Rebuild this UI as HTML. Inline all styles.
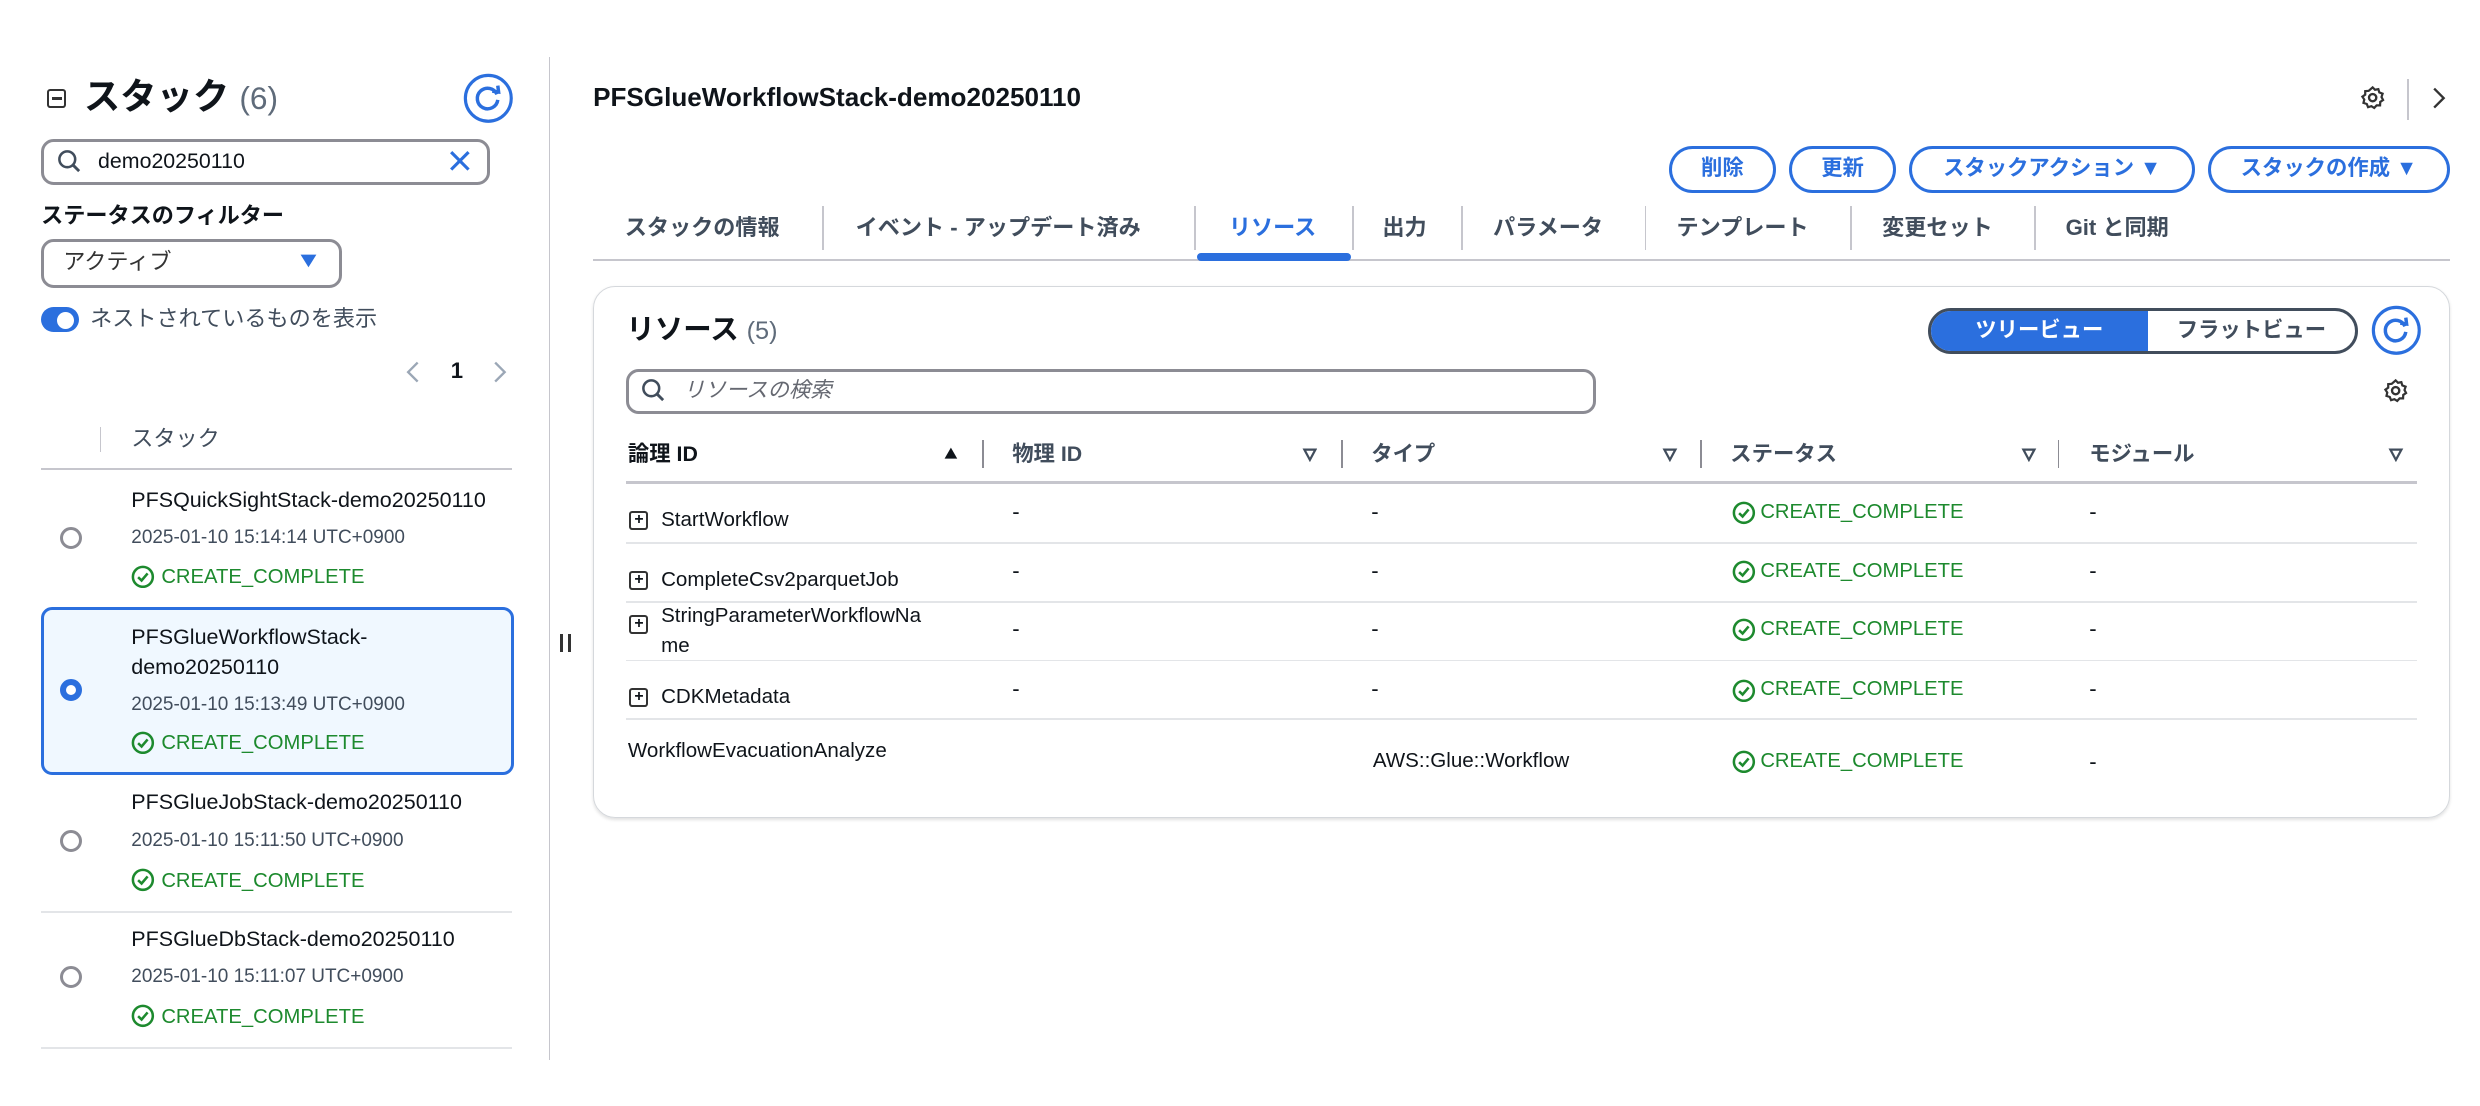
<!DOCTYPE html>
<html><head><meta charset="utf-8">
<style>
html,body{margin:0;padding:0;background:#fff;}
body{width:2480px;height:1106px;overflow:hidden;}
#w{position:relative;width:1568px;height:699px;zoom:1.5816;font-family:"Liberation Sans","Noto Sans CJK JP",sans-serif;color:#0f141a;font-size:14px;}
.t{position:absolute;white-space:nowrap;line-height:18px;}
.b{font-weight:bold;}
.s{font-size:12px;color:#414d5c;}
.ok{color:#1d8a2e;font-size:12.8px;}
.blue{color:#2b6fde;}
.ln{position:absolute;background:#d5dbdb;}
.box{position:absolute;box-sizing:border-box;}
.btn{position:absolute;box-sizing:border-box;border:2px solid #2b6fde;border-radius:16px;color:#2b6fde;font-weight:bold;font-size:13.5px;text-align:center;line-height:25px;height:30px;top:92px;}
.radio{position:absolute;width:14px;height:14px;border:2px solid #8c8c94;border-radius:50%;box-sizing:border-box;}
svg{position:absolute;}
.vd{position:absolute;width:1px;background:#c6c6cd;}
.nm{font-size:13.6px;}
</style></head><body><div id="w">

<div class="box" style="left:30px;top:56px;width:12px;height:12px;border:1.6px solid #333;border-radius:2px;"></div>
<div class="ln" style="left:33px;top:61.5px;width:6px;height:1.5px;background:#333"></div>
<div class="t b" style="left:53px;top:46px;font-size:23px;line-height:30px;">スタック <span style="font-weight:normal;color:#5f6b7a;font-size:20px">(6)</span></div>
<svg style="left:293px;top:46px" width="32" height="32" viewBox="0 0 32 32"><circle cx="16" cy="16" r="14.5" fill="none" stroke="#2b6fde" stroke-width="2"/><path d="M21.5 13.5 A6.5 6.5 0 1 0 22 17" fill="none" stroke="#2b6fde" stroke-width="2.2"/><path d="M18.5 11.5 L22.5 12 L22 8" fill="none" stroke="#2b6fde" stroke-width="2.2"/></svg>

<div class="box" style="left:26px;top:88px;width:284px;height:29px;border:2px solid #8c8c94;border-radius:8px;"></div>
<svg style="left:36px;top:94px" width="16" height="16" viewBox="0 0 16 16"><circle cx="6.5" cy="6.5" r="5" fill="none" stroke="#414d5c" stroke-width="1.6"/><path d="M10 10 L14 14" stroke="#414d5c" stroke-width="1.8"/></svg>
<div class="t" style="left:62px;top:93px;font-size:13.5px;">demo20250110</div>
<svg style="left:283px;top:94px" width="15" height="15" viewBox="0 0 15 15"><path d="M2 2 L13 13 M13 2 L2 13" stroke="#2b6fde" stroke-width="2"/></svg>

<div class="t b" style="left:26px;top:128px;font-size:14px;">ステータスのフィルター</div>
<div class="box" style="left:26px;top:151px;width:190px;height:31px;border:2px solid #8c8c94;border-radius:8px;"></div>
<div class="t" style="left:40px;top:157px;color:#333;">アクティブ</div>
<svg style="left:189px;top:160px" width="12" height="10" viewBox="0 0 12 10"><path d="M1 1 L11 1 L6 9 Z" fill="#2b6fde"/></svg>

<div class="box" style="left:26px;top:194px;width:24px;height:16px;background:#2b6fde;border-radius:8px;"></div>
<div class="box" style="left:36px;top:197px;width:11px;height:11px;background:#fff;border-radius:50%;"></div>
<div class="t" style="left:57px;top:193px;color:#414d5c;">ネストされているものを表示</div>

<svg style="left:256px;top:228px" width="10" height="14" viewBox="0 0 10 14"><path d="M8 1 L2 7 L8 13" fill="none" stroke="#9ba7b6" stroke-width="1.5"/></svg>
<div class="t b" style="left:285px;top:226px;">1</div>
<svg style="left:311px;top:228px" width="10" height="14" viewBox="0 0 10 14"><path d="M2 1 L8 7 L2 13" fill="none" stroke="#9ba7b6" stroke-width="1.5"/></svg>

<div class="vd" style="left:63px;top:270px;height:16px;"></div>
<div class="t" style="left:83px;top:269px;color:#414d5c;">スタック</div>
<div class="ln" style="left:26px;top:296px;width:298px;height:1px;background:#c6c6cd"></div>

<div class="t nm" style="left:83px;top:307px;">PFSQuickSightStack-demo20250110</div>
<div class="t s" style="left:83px;top:331px;">2025-01-10 15:14:14 UTC+0900</div>
<div class="t ok" style="left:102px;top:356px;">CREATE_COMPLETE</div>
<div class="radio" style="left:38px;top:333px;"></div>
<div class="box" style="left:26px;top:384px;width:299px;height:106px;background:#f0f8ff;border:2px solid #2b6fde;border-radius:7px;"></div>
<div class="t nm" style="left:83px;top:393px;line-height:19.5px;">PFSGlueWorkflowStack-<br>demo20250110</div>
<div class="t s" style="left:83px;top:437px;">2025-01-10 15:13:49 UTC+0900</div>
<div class="t ok" style="left:102px;top:461px;">CREATE_COMPLETE</div>
<div class="box" style="left:38px;top:429px;width:14px;height:14px;border:4px solid #2b6fde;border-radius:50%;background:#fff;"></div>
<div class="t nm" style="left:83px;top:498px;">PFSGlueJobStack-demo20250110</div>
<div class="t s" style="left:83px;top:523px;">2025-01-10 15:11:50 UTC+0900</div>
<div class="t ok" style="left:102px;top:548px;">CREATE_COMPLETE</div>
<div class="radio" style="left:38px;top:525px;"></div>
<div class="ln" style="left:26px;top:576px;width:298px;height:1px;background:#e3e5e8"></div>
<div class="t nm" style="left:83px;top:585px;">PFSGlueDbStack-demo20250110</div>
<div class="t s" style="left:83px;top:609px;">2025-01-10 15:11:07 UTC+0900</div>
<div class="t ok" style="left:102px;top:634px;">CREATE_COMPLETE</div>
<div class="radio" style="left:38px;top:611px;"></div>
<div class="ln" style="left:26px;top:662px;width:298px;height:1px;background:#e3e5e8"></div>

<svg style="left:83px;top:357px" width="15" height="15" viewBox="0 0 15 15"><circle cx="7.5" cy="7.5" r="6.3" fill="none" stroke="#1d8a2e" stroke-width="1.6"/><path d="M4.5 7.7 L6.7 9.8 L10.5 5.3" fill="none" stroke="#1d8a2e" stroke-width="1.6"/></svg>
<svg style="left:83px;top:462px" width="15" height="15" viewBox="0 0 15 15"><circle cx="7.5" cy="7.5" r="6.3" fill="none" stroke="#1d8a2e" stroke-width="1.6"/><path d="M4.5 7.7 L6.7 9.8 L10.5 5.3" fill="none" stroke="#1d8a2e" stroke-width="1.6"/></svg>
<svg style="left:83px;top:549px" width="15" height="15" viewBox="0 0 15 15"><circle cx="7.5" cy="7.5" r="6.3" fill="none" stroke="#1d8a2e" stroke-width="1.6"/><path d="M4.5 7.7 L6.7 9.8 L10.5 5.3" fill="none" stroke="#1d8a2e" stroke-width="1.6"/></svg>
<svg style="left:83px;top:635px" width="15" height="15" viewBox="0 0 15 15"><circle cx="7.5" cy="7.5" r="6.3" fill="none" stroke="#1d8a2e" stroke-width="1.6"/><path d="M4.5 7.7 L6.7 9.8 L10.5 5.3" fill="none" stroke="#1d8a2e" stroke-width="1.6"/></svg>

<div class="vd" style="left:347px;top:36px;height:634px;background:#c6c6cd"></div>
<div class="box" style="left:354px;top:401px;width:2px;height:11px;background:#333"></div>
<div class="box" style="left:359px;top:401px;width:2px;height:11px;background:#333"></div>

<div class="t b" style="left:375px;top:52px;font-size:16.5px;line-height:20px;">PFSGlueWorkflowStack-demo20250110</div>
<svg style="left:1492px;top:54px" width="16" height="16" viewBox="0 0 16 16"><circle cx="8" cy="8" r="2.3" fill="none" stroke="#333" stroke-width="1.5"/><path d="M8 1.5 L9.5 3 L11.6 2.6 L12.2 4.7 L14.3 5.5 L13.6 7.6 L14.6 9.5 L12.8 10.7 L12.7 12.9 L10.5 12.9 L9 14.5 L7.2 13.4 L5.1 14 L4.3 12 L2.2 11.3 L2.7 9.2 L1.5 7.4 L3.3 6.1 L3.3 3.9 L5.5 3.7 Z" fill="none" stroke="#333" stroke-width="1.4"/></svg>
<div class="vd" style="left:1522px;top:50px;height:26px;"></div>
<svg style="left:1537px;top:55px" width="10" height="14" viewBox="0 0 10 14"><path d="M2 1 L8 7 L2 13" fill="none" stroke="#333" stroke-width="1.5"/></svg>

<div class="btn" style="left:1055px;width:68px;">削除</div>
<div class="btn" style="left:1131px;width:68px;">更新</div>
<div class="btn" style="left:1207px;width:181px;">スタックアクション ▼</div>
<div class="btn" style="left:1396px;width:153px;">スタックの作成 ▼</div>

<div class="t b" style="left:395px;top:135px;color:#414d5c;">スタックの情報</div>
<div class="vd" style="left:520px;top:130px;height:28px;"></div>
<div class="t b" style="left:541px;top:135px;color:#414d5c;">イベント - アップデート済み</div>
<div class="vd" style="left:755px;top:130px;height:28px;"></div>
<div class="t b blue" style="left:777px;top:135px;">リソース</div>
<div class="vd" style="left:855px;top:130px;height:28px;"></div>
<div class="t b" style="left:874px;top:135px;color:#414d5c;">出力</div>
<div class="vd" style="left:924px;top:130px;height:28px;"></div>
<div class="t b" style="left:944px;top:135px;color:#414d5c;">パラメータ</div>
<div class="vd" style="left:1040px;top:130px;height:28px;"></div>
<div class="t b" style="left:1060px;top:135px;color:#414d5c;">テンプレート</div>
<div class="vd" style="left:1170px;top:130px;height:28px;"></div>
<div class="t b" style="left:1190px;top:135px;color:#414d5c;">変更セット</div>
<div class="vd" style="left:1286px;top:130px;height:28px;"></div>
<div class="t b" style="left:1306px;top:135px;color:#414d5c;">Git と同期</div>
<div class="ln" style="left:375px;top:164px;width:1174px;height:1px;background:#c6c6cd"></div>
<div class="box" style="left:757px;top:160px;width:97px;height:5px;background:#2b6fde;border-radius:3px;"></div>

<div class="box" style="left:375px;top:181px;width:1174px;height:336px;border:1px solid #d5d8dc;border-radius:14px;box-shadow:0 1px 2px rgba(0,0,0,0.12);"></div>
<div class="t b" style="left:396px;top:197px;font-size:18px;line-height:24px;">リソース <span style="font-weight:normal;color:#5f6b7a;font-size:16px">(5)</span></div>
<div class="box" style="left:1219px;top:195px;width:272px;height:29px;border:2px solid #414d5c;border-radius:15px;overflow:hidden;">
  <div style="position:absolute;left:0;top:0;width:137px;height:100%;background:#2b6fde;color:#fff;font-weight:bold;font-size:13.5px;text-align:center;line-height:25px;">ツリービュー</div>
  <div style="position:absolute;left:137px;top:0;right:0;height:100%;color:#414d5c;font-weight:bold;font-size:13.5px;text-align:center;line-height:25px;">フラットビュー</div>
</div>
<svg style="left:1499px;top:193px" width="32" height="32" viewBox="0 0 32 32"><circle cx="16" cy="16" r="14.5" fill="none" stroke="#2b6fde" stroke-width="2"/><path d="M21.5 13.5 A6.5 6.5 0 1 0 22 17" fill="none" stroke="#2b6fde" stroke-width="2.2"/><path d="M18.5 11.5 L22.5 12 L22 8" fill="none" stroke="#2b6fde" stroke-width="2.2"/></svg>

<div class="box" style="left:396px;top:233px;width:613px;height:29px;border:2px solid #8c8c94;border-radius:8px;"></div>
<svg style="left:405px;top:239px" width="16" height="16" viewBox="0 0 16 16"><circle cx="6.5" cy="6.5" r="5" fill="none" stroke="#414d5c" stroke-width="1.6"/><path d="M10 10 L14 14" stroke="#414d5c" stroke-width="1.8"/></svg>
<div class="t" style="left:432px;top:238px;font-style:italic;color:#656871;font-size:13.5px;">リソースの検索</div>
<svg style="left:1507px;top:239px" width="16" height="16" viewBox="0 0 16 16"><circle cx="8" cy="8" r="2.3" fill="none" stroke="#333" stroke-width="1.5"/><path d="M8 1.5 L9.5 3 L11.6 2.6 L12.2 4.7 L14.3 5.5 L13.6 7.6 L14.6 9.5 L12.8 10.7 L12.7 12.9 L10.5 12.9 L9 14.5 L7.2 13.4 L5.1 14 L4.3 12 L2.2 11.3 L2.7 9.2 L1.5 7.4 L3.3 6.1 L3.3 3.9 L5.5 3.7 Z" fill="none" stroke="#333" stroke-width="1.4"/></svg>

<div class="t b" style="left:397px;top:278px;font-size:13.5px;">論理 ID</div>
<svg style="left:596px;top:282px" width="10" height="9" viewBox="0 0 10 9"><path d="M1 8 L9 8 L5 1 Z" fill="#0f141a"/></svg>
<div class="vd" style="left:621px;top:278px;height:18px;background:#8c8c94"></div>
<div class="t b" style="left:640px;top:278px;color:#414d5c;font-size:13.5px;">物理 ID</div>
<div class="vd" style="left:848px;top:278px;height:18px;background:#8c8c94"></div>
<div class="t b" style="left:867px;top:278px;color:#414d5c;font-size:13.5px;">タイプ</div>
<div class="vd" style="left:1075px;top:278px;height:18px;background:#8c8c94"></div>
<div class="t b" style="left:1094px;top:278px;color:#414d5c;font-size:13.5px;">ステータス</div>
<div class="vd" style="left:1301px;top:278px;height:18px;background:#8c8c94"></div>
<div class="t b" style="left:1321px;top:278px;color:#414d5c;font-size:13.5px;">モジュール</div>
<svg style="left:823px;top:283px" width="10" height="9" viewBox="0 0 10 9"><path d="M1.5 1 L8.5 1 L5 7.5 Z" fill="none" stroke="#414d5c" stroke-width="1.4"/></svg>
<svg style="left:1051px;top:283px" width="10" height="9" viewBox="0 0 10 9"><path d="M1.5 1 L8.5 1 L5 7.5 Z" fill="none" stroke="#414d5c" stroke-width="1.4"/></svg>
<svg style="left:1278px;top:283px" width="10" height="9" viewBox="0 0 10 9"><path d="M1.5 1 L8.5 1 L5 7.5 Z" fill="none" stroke="#414d5c" stroke-width="1.4"/></svg>
<svg style="left:1510px;top:283px" width="10" height="9" viewBox="0 0 10 9"><path d="M1.5 1 L8.5 1 L5 7.5 Z" fill="none" stroke="#414d5c" stroke-width="1.4"/></svg>
<div class="ln" style="left:396px;top:304px;width:1132px;height:2px;background:#c6c6cd"></div>

<div class="ln" style="left:396px;top:343px;width:1132px;height:1px;background:#e3e5e8"></div>
<div class="ln" style="left:396px;top:380px;width:1132px;height:1px;background:#e3e5e8"></div>
<div class="ln" style="left:396px;top:417px;width:1132px;height:1px;background:#e3e5e8"></div>
<div class="ln" style="left:396px;top:454px;width:1132px;height:1px;background:#e3e5e8"></div>

<div class="t" style="left:418px;top:320px;font-size:13px;">StartWorkflow</div>
<div class="t" style="left:418px;top:358px;font-size:13px;">CompleteCsv2parquetJob</div>
<div class="t" style="left:418px;top:380px;font-size:13px;line-height:19px;">StringParameterWorkflowNa<br>me</div>
<div class="t" style="left:418px;top:432px;font-size:13px;">CDKMetadata</div>
<div class="t" style="left:397px;top:466px;font-size:13px;">WorkflowEvacuationAnalyze</div>
<div class="t" style="left:868px;top:472px;font-size:13px;">AWS::Glue::Workflow</div>

<div class="box" style="left:398px;top:323px;width:12px;height:12px;border:1.5px solid #333;border-radius:2px;font-size:10px;line-height:9px;text-align:center;font-weight:bold;">+</div>
<div class="box" style="left:398px;top:361px;width:12px;height:12px;border:1.5px solid #333;border-radius:2px;font-size:10px;line-height:9px;text-align:center;font-weight:bold;">+</div>
<div class="box" style="left:398px;top:389px;width:12px;height:12px;border:1.5px solid #333;border-radius:2px;font-size:10px;line-height:9px;text-align:center;font-weight:bold;">+</div>
<div class="box" style="left:398px;top:435px;width:12px;height:12px;border:1.5px solid #333;border-radius:2px;font-size:10px;line-height:9px;text-align:center;font-weight:bold;">+</div>

<div class="t" style="left:640px;top:315px;">-</div><div class="t" style="left:867px;top:315px;">-</div><div class="t" style="left:1321px;top:315px;">-</div>
<div class="t" style="left:640px;top:352px;">-</div><div class="t" style="left:867px;top:352px;">-</div><div class="t" style="left:1321px;top:352px;">-</div>
<div class="t" style="left:640px;top:389px;">-</div><div class="t" style="left:867px;top:389px;">-</div><div class="t" style="left:1321px;top:389px;">-</div>
<div class="t" style="left:640px;top:427px;">-</div><div class="t" style="left:867px;top:427px;">-</div><div class="t" style="left:1321px;top:427px;">-</div>
<div class="t" style="left:1321px;top:473px;">-</div>

<div class="t ok" style="left:1113px;top:315px;">CREATE_COMPLETE</div>
<div class="t ok" style="left:1113px;top:352px;">CREATE_COMPLETE</div>
<div class="t ok" style="left:1113px;top:389px;">CREATE_COMPLETE</div>
<div class="t ok" style="left:1113px;top:427px;">CREATE_COMPLETE</div>
<div class="t ok" style="left:1113px;top:472px;">CREATE_COMPLETE</div>
<svg style="left:1095px;top:317px" width="15" height="15" viewBox="0 0 15 15"><circle cx="7.5" cy="7.5" r="6.3" fill="none" stroke="#1d8a2e" stroke-width="1.6"/><path d="M4.5 7.7 L6.7 9.8 L10.5 5.3" fill="none" stroke="#1d8a2e" stroke-width="1.6"/></svg>
<svg style="left:1095px;top:354px" width="15" height="15" viewBox="0 0 15 15"><circle cx="7.5" cy="7.5" r="6.3" fill="none" stroke="#1d8a2e" stroke-width="1.6"/><path d="M4.5 7.7 L6.7 9.8 L10.5 5.3" fill="none" stroke="#1d8a2e" stroke-width="1.6"/></svg>
<svg style="left:1095px;top:391px" width="15" height="15" viewBox="0 0 15 15"><circle cx="7.5" cy="7.5" r="6.3" fill="none" stroke="#1d8a2e" stroke-width="1.6"/><path d="M4.5 7.7 L6.7 9.8 L10.5 5.3" fill="none" stroke="#1d8a2e" stroke-width="1.6"/></svg>
<svg style="left:1095px;top:429px" width="15" height="15" viewBox="0 0 15 15"><circle cx="7.5" cy="7.5" r="6.3" fill="none" stroke="#1d8a2e" stroke-width="1.6"/><path d="M4.5 7.7 L6.7 9.8 L10.5 5.3" fill="none" stroke="#1d8a2e" stroke-width="1.6"/></svg>
<svg style="left:1095px;top:474px" width="15" height="15" viewBox="0 0 15 15"><circle cx="7.5" cy="7.5" r="6.3" fill="none" stroke="#1d8a2e" stroke-width="1.6"/><path d="M4.5 7.7 L6.7 9.8 L10.5 5.3" fill="none" stroke="#1d8a2e" stroke-width="1.6"/></svg>

</div></body></html>
